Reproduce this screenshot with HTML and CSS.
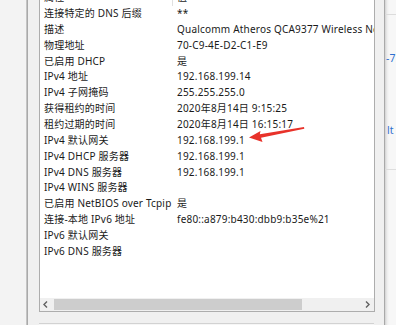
FILE: index.html
```html
<!DOCTYPE html>
<html lang="zh-CN">
<head>
<meta charset="utf-8">
<title>网络连接详细信息</title>
<link rel="stylesheet" href="styles.css">
</head>
<body>
<div class="desk">
  <div class="back-left"></div>
  <div class="dialog">
    <div class="list">
      <div class="head">
        <div class="cell c1">属性</div>
        <div class="cell c2">值</div>
      </div>
      <div class="rows">
        <div class="row"><div class="cell c1">连接特定的 DNS 后缀</div><div class="cell c2">**</div></div>
        <div class="row"><div class="cell c1">描述</div><div class="cell c2">Qualcomm Atheros QCA9377 Wireless Network Adapter</div></div>
        <div class="row"><div class="cell c1">物理地址</div><div class="cell c2">70-C9-4E-D2-C1-E9</div></div>
        <div class="row"><div class="cell c1">已启用 DHCP</div><div class="cell c2">是</div></div>
        <div class="row"><div class="cell c1">IPv4 地址</div><div class="cell c2">192.168.199.14</div></div>
        <div class="row"><div class="cell c1">IPv4 子网掩码</div><div class="cell c2">255.255.255.0</div></div>
        <div class="row"><div class="cell c1">获得租约的时间</div><div class="cell c2">2020年8月14日 9:15:25</div></div>
        <div class="row"><div class="cell c1">租约过期的时间</div><div class="cell c2">2020年8月14日 16:15:17</div></div>
        <div class="row"><div class="cell c1">IPv4 默认网关</div><div class="cell c2">192.168.199.1</div></div>
        <div class="row"><div class="cell c1">IPv4 DHCP 服务器</div><div class="cell c2">192.168.199.1</div></div>
        <div class="row"><div class="cell c1">IPv4 DNS 服务器</div><div class="cell c2">192.168.199.1</div></div>
        <div class="row"><div class="cell c1">IPv4 WINS 服务器</div><div class="cell c2"></div></div>
        <div class="row"><div class="cell c1">已启用 NetBIOS over Tcpip</div><div class="cell c2">是</div></div>
        <div class="row"><div class="cell c1">连接-本地 IPv6 地址</div><div class="cell c2">fe80::a879:b430:dbb9:b35e%21</div></div>
        <div class="row"><div class="cell c1">IPv6 默认网关</div><div class="cell c2"></div></div>
        <div class="row"><div class="cell c1">IPv6 DNS 服务器</div><div class="cell c2"></div></div>
      </div>
      <div class="hscroll">
        <div class="sb-btn">
          <svg width="13" height="13" viewBox="0 0 13 13"><polyline points="7,3.5 4,6.5 7,9.5" fill="none" stroke="#606060" stroke-width="1.4"/></svg>
        </div>
        <div class="sb-track"><div class="sb-thumb"></div></div>
        <div class="sb-btn">
          <svg width="13" height="13" viewBox="0 0 13 13"><polyline points="5,3.5 8,6.5 5,9.5" fill="none" stroke="#606060" stroke-width="1.4"/></svg>
        </div>
      </div>
    </div>
    <div class="below"></div>
  </div>
  <div class="back-right">
    <div class="br-line1"></div>
    <div class="br-text br-t1">-7</div>
    <div class="br-text br-t2">lt</div>
    <div class="br-line2"></div>
  </div>
</div>
<svg class="arrow" width="396" height="325" viewBox="0 0 396 325">
  <polygon points="249,137.5 260.5,131 259.8,134.3 304,127 304.3,128.8 261,137.8 262.5,142" fill="#e8322a"/>
</svg>
</body>
</html>
```
FILE: styles.css
```css
html, body {
  margin: 0;
  padding: 0;
}
body {
  width: 396px;
  height: 325px;
  overflow: hidden;
  background: #f0f0f0;
  font-family: "Noto Sans", "Noto Sans CJK SC", sans-serif;
  font-size: 10px;
  color: #1a1a1a;
  position: relative;
}
.desk {
  display: flex;
  height: 325px;
}
.back-left {
  width: 26px;
  flex: none;
  background: #f3f3f3;
}
.dialog {
  flex: none;
  background: #f0f0f0;
  border-left: 1px solid #c4c4c4;
  border-right: 1px solid #a9a9a9;
  box-shadow: inset 1px 0 0 #a9a9a9;
  padding: 0 9px 0 12px;
  box-sizing: border-box;
  width: 359px;
  display: flex;
  flex-direction: column;
}
.list {
  margin-top: -13px;
  height: 325px;
  flex: none;
  box-sizing: border-box;
  border: 1px solid #adadad;
  background: #fff;
  display: flex;
  flex-direction: column;
  overflow: hidden;
}
.head {
  height: 18px;
  flex: none;
  display: grid;
  grid-template-columns: 133px 1fr;
  line-height: 18px;
}
.head .c1 {
  border-right: 1px solid #e0e0e0;
  box-sizing: border-box;
}
.rows {
  flex: 1;
}
.row {
  display: grid;
  grid-template-columns: 133px 600px;
  height: 15.87px;
  line-height: 15.87px;
}
.cell {
  padding-left: 4px;
  white-space: nowrap;
  overflow: hidden;
  letter-spacing: 0.2px;
}
.hscroll {
  height: 13px;
  flex: none;
  display: flex;
  background: #f0f0f0;
}
.sb-btn {
  width: 13px;
  height: 13px;
  flex: none;
  display: flex;
}
.sb-track {
  flex: 1;
  padding: 1px 0;
  box-sizing: border-box;
  display: flex;
}
.sb-thumb {
  width: 248px;
  margin-left: 1px;
  background: #cdcdcd;
}
.below {
  margin-top: 11px;
  height: 10px;
  border-top: 1px solid #d2d2d2;
  background: #f6f6f6;
  margin-right: 1px;
}
.back-right {
  flex: 1;
  background: linear-gradient(to right, #d2d2d2 0, #ececec 2px, #f7f7f7 4px);
  display: flex;
  flex-direction: column;
}
.br-line1 {
  margin-top: 14px;
  height: 1px;
  background: #dcdcdc;
}
.br-text {
  color: #2f6fcf;
  font-family: "Noto Sans", sans-serif;
  font-size: 10.5px;
  line-height: 12px;
  height: 12px;
  padding-left: 1px;
}
.br-t1 {
  margin-top: 37px;
}
.br-t2 {
  margin-top: 60px;
  padding-left: 2px;
}
.br-line2 {
  margin-top: 33px;
  height: 1px;
  background: #dedede;
}
.arrow {
  position: absolute;
  left: 0;
  top: 0;
  pointer-events: none;
}
```
